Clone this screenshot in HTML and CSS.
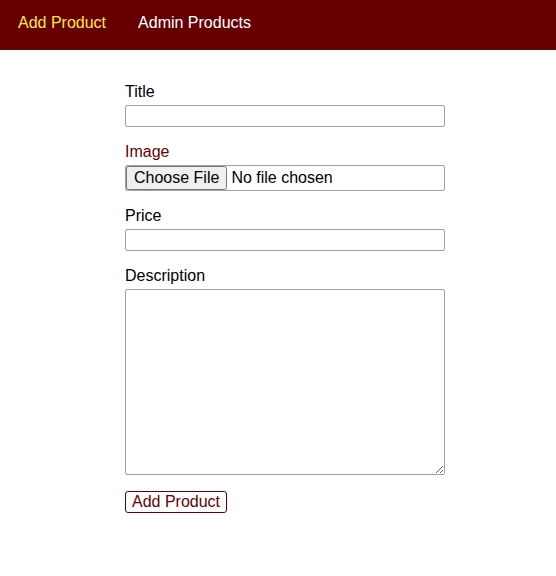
FILE: index.html
```html
<!DOCTYPE html>
<html lang="en">
<head>
<meta charset="UTF-8">
<title>Add Product</title>
<link rel="stylesheet" href="styles.css">
</head>
<body>
<header class="main-header">
  <nav class="main-header__nav">
    <ul class="main-header__item-list">
      <li class="main-header__item"><a class="active" href="#">Add Product</a></li>
      <li class="main-header__item"><a href="#">Admin Products</a></li>
    </ul>
  </nav>
</header>
<main class="main">
  <form class="product-form">
    <div class="form-control">
      <label for="title">Title</label>
      <input type="text" name="title" id="title">
    </div>
    <div class="form-control">
      <label for="image" class="label-image">Image</label>
      <input type="file" name="image" id="image">
    </div>
    <div class="form-control">
      <label for="price">Price</label>
      <input type="number" name="price" id="price" step="0.01">
    </div>
    <div class="form-control">
      <label for="description">Description</label>
      <textarea name="description" id="description" rows="10"></textarea>
    </div>
    <button class="btn" type="submit">Add Product</button>
  </form>
</main>
</body>
</html>
```
FILE: styles.css
```css
* { box-sizing: border-box; }
body {
  margin: 0;
  padding: 0;
  font-family: "Liberation Sans", Arial, sans-serif;
  font-size: 16px;
  color: #000;
}
.main-header {
  width: 100%;
  height: 50px;
  background-color: #660000;
  padding: 0 18px 4px;
  display: flex;
  align-items: center;
}
.main-header__item-list {
  list-style: none;
  margin: 0;
  padding: 0;
  display: flex;
  gap: 32px;
}
.main-header__item a {
  text-decoration: none;
  color: #fff;
}
.main-header__item a.active {
  color: #ffeb3b;
}
.main {
  padding: 17px 0 16px 14px;
  display: flex;
  justify-content: center;
}
.product-form {
  width: 320px;
}
.form-control {
  margin: 16px 0;
}
.form-control label,
.form-control input,
.form-control textarea {
  display: block;
  width: 100%;
  margin-bottom: 4px;
}
.form-control input,
.form-control textarea {
  border: 1px solid #a1a1a1;
  font: inherit;
  border-radius: 2px;
}
.label-image { color: #6b0000; }
.form-control textarea { height: 186px; }
.btn {
  font: inherit;
  border: 1px solid #660000;
  color: #660000;
  background: #fff;
  border-radius: 3px;
  padding: 1px 6px;
  cursor: pointer;
}
```
